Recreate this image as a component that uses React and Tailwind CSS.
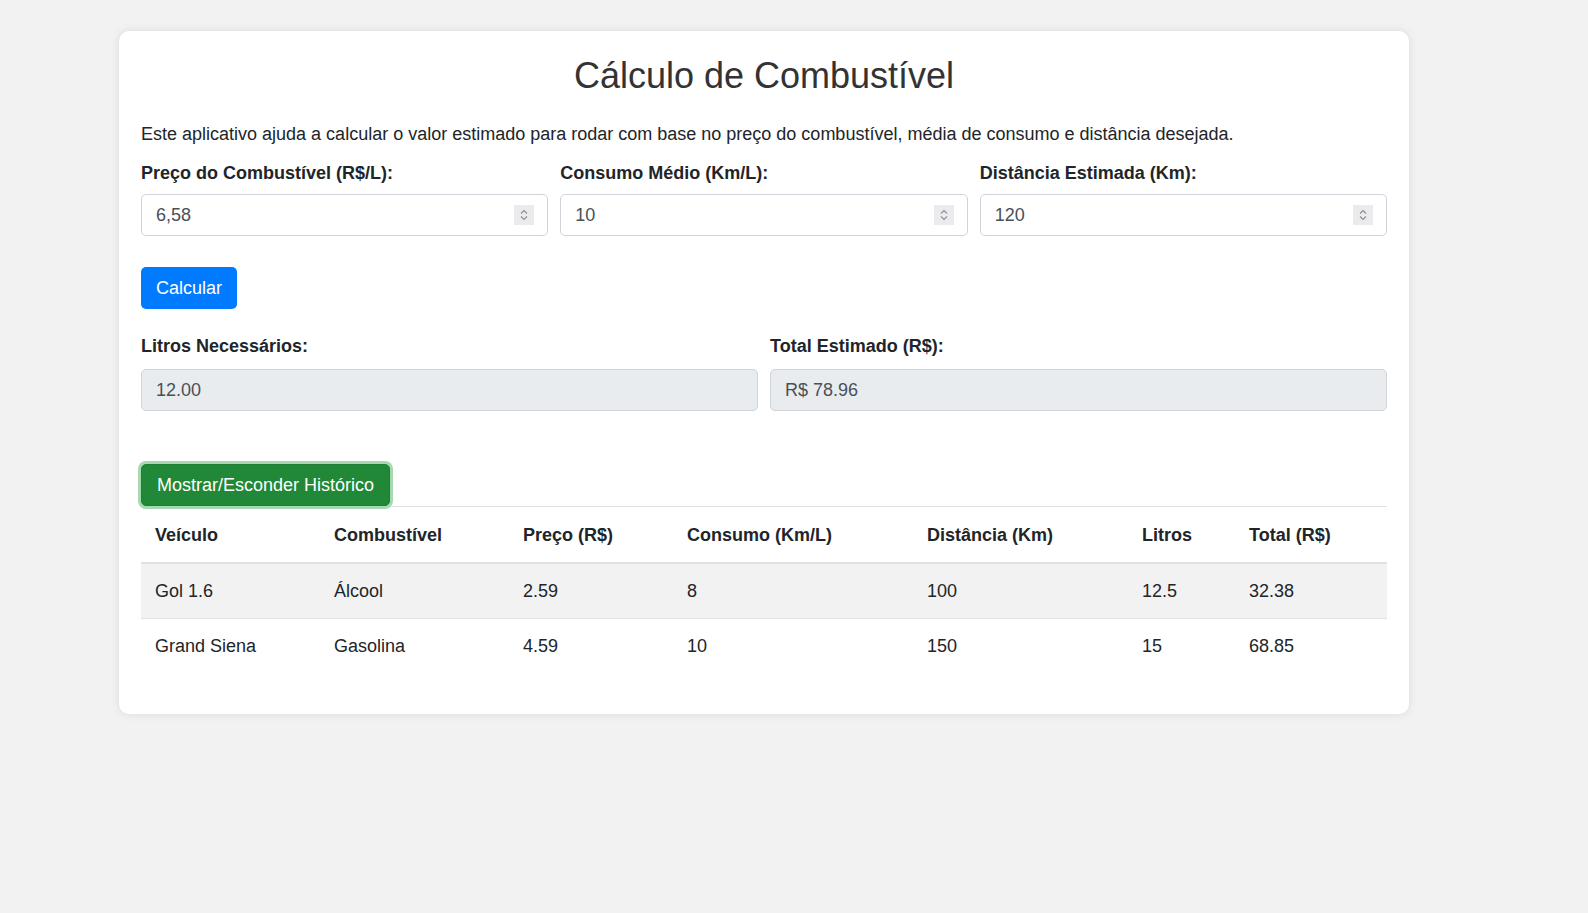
import React, { useState } from "react";

const Spinner = () => (
  <svg width="20" height="20" viewBox="0 0 20 20" className="shrink-0">
    <rect x="0" y="0" width="20" height="20" fill="#ebebee" />
    <path d="M7 8.5 L10 5.5 L13 8.5" fill="none" stroke="#8d8d96" strokeWidth="1.1" />
    <path d="M7 11.5 L10 14.5 L13 11.5" fill="none" stroke="#8d8d96" strokeWidth="1.1" />
  </svg>
);

const NumberField = ({ label, value, onChange }) => (
  <div className="flex flex-col">
    <label className="mb-[9px] font-bold leading-6 text-[#212529]">{label}</label>
    <div className="flex h-[42px] items-center rounded-[5px] border border-[#ced4da] bg-white pl-[14px] pr-[13px]">
      <input
        type="text"
        value={value}
        onChange={onChange}
        className="min-w-0 flex-1 bg-transparent text-[#495057] outline-none"
      />
      <Spinner />
    </div>
  </div>
);

const ResultField = ({ label, value }) => (
  <div className="flex flex-col">
    <label className="mb-[11px] font-bold leading-6 text-[#212529]">{label}</label>
    <div className="flex h-[42px] items-center rounded-[5px] border border-[#ced4da] bg-[#e9ecef] pl-[14px] text-[#495057]">
      {value}
    </div>
  </div>
);

const historico = [
  { veiculo: "Gol 1.6", combustivel: "Álcool", preco: "2.59", consumo: "8", distancia: "100", litros: "12.5", total: "32.38" },
  { veiculo: "Grand Siena", combustivel: "Gasolina", preco: "4.59", consumo: "10", distancia: "150", litros: "15", total: "68.85" },
];

const App = () => {
  const [preco, setPreco] = useState("6,58");
  const [consumo, setConsumo] = useState("10");
  const [distancia, setDistancia] = useState("120");
  const [showHistory, setShowHistory] = useState(true);

  return (
    <div className="min-h-screen bg-[#f2f2f2] pt-[31px] font-['Liberation_Sans',Arial,sans-serif] text-[18px]">
      <div className="ml-[119px] w-[1290px] rounded-[10px] bg-white px-[22px] pb-[41px] pt-6 shadow-[0_0_10px_rgba(0,0,0,0.1)]">
        <h1 className="mb-[25px] text-center text-[36px] leading-[42px] text-[#333]">Cálculo de Combustível</h1>
        <p className="mb-[15px] leading-6 text-[#212529]">
          Este aplicativo ajuda a calcular o valor estimado para rodar com base no preço do combustível, média de consumo e distância desejada.
        </p>

        <div className="grid grid-cols-3 gap-x-3">
          <NumberField label="Preço do Combustível (R$/L):" value={preco} onChange={(e) => setPreco(e.target.value)} />
          <NumberField label="Consumo Médio (Km/L):" value={consumo} onChange={(e) => setConsumo(e.target.value)} />
          <NumberField label="Distância Estimada (Km):" value={distancia} onChange={(e) => setDistancia(e.target.value)} />
        </div>

        <div className="mt-[31px] flex">
          <button className="h-[42px] rounded-[5px] bg-[#007bff] px-[15px] text-white">Calcular</button>
        </div>

        <div className="mt-[25px] grid grid-cols-2 gap-x-3">
          <ResultField label="Litros Necessários:" value="12.00" />
          <ResultField label="Total Estimado (R$):" value="R$ 78.96" />
        </div>

        <div className="mt-[53px] flex">
          <button
            onClick={() => setShowHistory(!showHistory)}
            className="h-[42px] rounded-[5px] border border-[#1e7e34] bg-[#218838] px-[15px] text-white ring-[3px] ring-[#a6d9b1]"
          >
            Mostrar/Esconder Histórico
          </button>
        </div>

        {showHistory && (
          <table className="w-full table-fixed border-collapse text-left text-[#212529]">
            <thead>
              <tr>
                <th className="w-[179px] border-t border-b-2 border-[#dee2e6] px-[14px] pb-[15px] pt-[16px] leading-6">Veículo</th>
                <th className="w-[189px] border-t border-b-2 border-[#dee2e6] px-[14px] pb-[15px] pt-[16px] leading-6">Combustível</th>
                <th className="w-[164px] border-t border-b-2 border-[#dee2e6] px-[14px] pb-[15px] pt-[16px] leading-6">Preço (R$)</th>
                <th className="w-[240px] border-t border-b-2 border-[#dee2e6] px-[14px] pb-[15px] pt-[16px] leading-6">Consumo (Km/L)</th>
                <th className="w-[215px] border-t border-b-2 border-[#dee2e6] px-[14px] pb-[15px] pt-[16px] leading-6">Distância (Km)</th>
                <th className="w-[107px] border-t border-b-2 border-[#dee2e6] px-[14px] pb-[15px] pt-[16px] leading-6">Litros</th>
                <th className="border-t border-b-2 border-[#dee2e6] px-[14px] pb-[15px] pt-[16px] leading-6">Total (R$)</th>
              </tr>
            </thead>
            <tbody>
              {historico.map((item, index) => (
                <tr key={index} className={index % 2 === 0 ? "bg-[#f2f2f2]" : ""}>
                  <td className="border-t border-[#dee2e6] px-[14px] py-[15px] leading-6">{item.veiculo}</td>
                  <td className="border-t border-[#dee2e6] px-[14px] py-[15px] leading-6">{item.combustivel}</td>
                  <td className="border-t border-[#dee2e6] px-[14px] py-[15px] leading-6">{item.preco}</td>
                  <td className="border-t border-[#dee2e6] px-[14px] py-[15px] leading-6">{item.consumo}</td>
                  <td className="border-t border-[#dee2e6] px-[14px] py-[15px] leading-6">{item.distancia}</td>
                  <td className="border-t border-[#dee2e6] px-[14px] py-[15px] leading-6">{item.litros}</td>
                  <td className="border-t border-[#dee2e6] px-[14px] py-[15px] leading-6">{item.total}</td>
                </tr>
              ))}
            </tbody>
          </table>
        )}
      </div>
    </div>
  );
};

export default App;
